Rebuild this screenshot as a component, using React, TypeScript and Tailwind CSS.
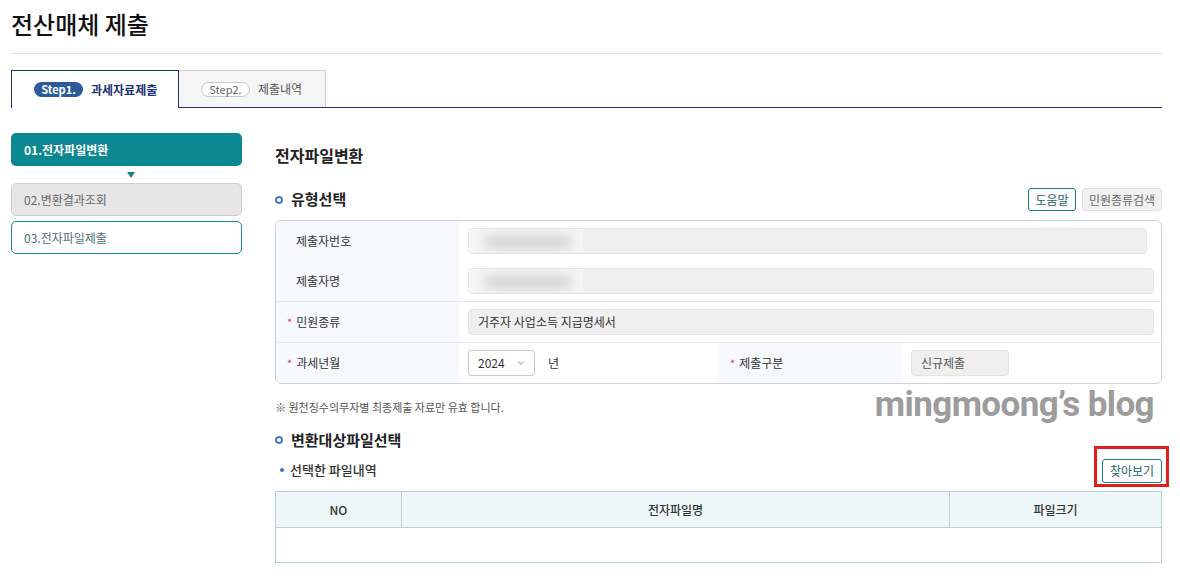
import { ChevronDown } from "lucide-react";

const font = { fontFamily: '"Noto Sans CJK KR", "Noto Sans", sans-serif' };

function Bullet() {
  return <span className="mr-[8px] inline-block h-[8px] w-[8px] rounded-full border-2 border-[#4a78d6]" />;
}

function Req() {
  return <span className="mr-[4px] text-[11px] text-[#d6336c]">*</span>;
}

function Blurred() {
  return (
    <div className="relative h-[26px] overflow-hidden rounded-[4px] border border-[#e6e6e6] bg-[#efefef]">
      <div className="absolute left-0 top-0 h-full w-[114px] bg-[#f6f6f6]" />
      <div className="absolute left-[14px] top-[6px] h-[14px] w-[90px] rounded-full bg-[#d4d4d4] blur-[6px]" />
    </div>
  );
}

export default function App() {
  return (
    <div className="min-h-[576px] bg-white text-[#222]" style={font}>
      <div className="ml-[11px] w-[1151px]">
        <div className="h-[54px] border-b border-[#e4e4e4] pt-[7px]">
          <h1 className="text-[24px] font-medium leading-[34px] text-[#111]">전산매체 제출</h1>
        </div>

        <div className="mt-[16px] flex h-[38px] border-b border-[#1e3276]">
          <div className="-mb-px flex w-[168px] items-center border border-b-0 border-[#1e3276] bg-white pl-[22px]">
            <span className="flex h-[15px] w-[49px] items-center justify-center rounded-full bg-[#2b5b99] text-[11px] font-bold text-white">
              Step1.
            </span>
            <span className="ml-[8px] text-[12px] font-bold text-[#1e3276]">과세자료제출</span>
          </div>
          <div className="flex w-[147px] items-center border-r border-t border-[#cfcfcf] bg-[#f6f6f6] pl-[22px]">
            <span className="flex h-[15px] w-[49px] items-center justify-center rounded-full border border-[#c8c8c8] bg-white text-[11px] text-[#666]">
              Step2.
            </span>
            <span className="ml-[8px] text-[12px] text-[#555]">제출내역</span>
          </div>
        </div>

        <div className="mt-[25px] flex">
          <nav className="w-[231px] shrink-0">
            <div className="flex h-[33px] items-center rounded-[5px] bg-[#0c8890] pl-[13px] text-[12px] font-bold text-white">
              01.전자파일변환
            </div>
            <div className="flex h-[17px] items-center justify-center pl-[9px]">
              <span className="h-0 w-0 border-l-[4px] border-r-[4px] border-t-[6px] border-l-transparent border-r-transparent border-t-[#1c7f86]" />
            </div>
            <div className="flex h-[33px] items-center rounded-[5px] border border-[#cfcfcf] bg-[#e6e6e6] pl-[12px] text-[12px] text-[#666]">
              02.변환결과조회
            </div>
            <div className="mt-[5px] flex h-[33px] items-center rounded-[5px] border border-[#1b8a8f] bg-white pl-[12px] text-[12px] text-[#4d6f77]">
              03.전자파일제출
            </div>
          </nav>

          <main className="relative ml-[33px] flex-1 pt-[10px]">
            <h2 className="text-[16px] font-bold leading-[24px] text-[#222]">전자파일변환</h2>

            <div className="mt-[21px] flex h-[23px] items-center justify-between">
              <div className="flex items-center text-[15px] font-bold">
                <Bullet />
                유형선택
              </div>
              <div className="flex gap-[6px]">
                <button className="h-[23px] w-[48px] rounded-[3px] border border-[#1b7f86] bg-white text-[12px] text-[#2a5f6a]">
                  도움말
                </button>
                <button className="h-[23px] w-[80px] rounded-[3px] border border-[#e2e2e2] bg-[#f1f1f1] text-[12px] text-[#666]">
                  민원종류검색
                </button>
              </div>
            </div>

            <div className="mt-[9px] overflow-hidden rounded-[6px] border border-[#c8d3e2] text-[12px] text-[#333]">
              <div className="flex h-[40px]">
                <div className="flex w-[183px] items-center bg-[#f8f9fc] pl-[20px]">제출자번호</div>
                <div className="flex-1 pl-[9px] pr-[14px] pt-[7px]">
                  <Blurred />
                </div>
              </div>
              <div className="flex h-[40px]">
                <div className="flex w-[183px] items-center bg-[#f8f9fc] pl-[20px]">제출자명</div>
                <div className="flex-1 pl-[9px] pr-[7px] pt-[7px]">
                  <Blurred />
                </div>
              </div>
              <div className="flex h-[41px] border-t border-[#e3e8ef]">
                <div className="flex w-[183px] items-center bg-[#f8f9fc] pl-[11px]">
                  <Req />
                  민원종류
                </div>
                <div className="flex flex-1 items-center pl-[9px] pr-[7px]">
                  <div className="flex h-[26px] w-full items-center rounded-[4px] border border-[#e3e3e3] bg-[#efefef] pl-[9px] text-[#333]">
                    거주자 사업소득 지급명세서
                  </div>
                </div>
              </div>
              <div className="flex h-[41px] border-t border-[#e3e8ef]">
                <div className="flex w-[183px] items-center bg-[#f8f9fc] pl-[11px]">
                  <Req />
                  과세년월
                </div>
                <div className="flex w-[260px] items-center pl-[9px]">
                  <div className="flex h-[26px] w-[67px] items-center justify-between rounded-[3px] border border-[#c9c9c9] bg-white pl-[9px] pr-[8px]">
                    <span>2024</span>
                    <ChevronDown size={10} strokeWidth={2} className="text-[#777]" />
                  </div>
                  <span className="ml-[13px]">년</span>
                </div>
                <div className="flex w-[183px] items-center bg-[#f8f9fc] pl-[11px]">
                  <Req />
                  제출구분
                </div>
                <div className="flex flex-1 items-center pl-[9px]">
                  <div className="flex h-[26px] w-[98px] items-center rounded-[4px] border border-[#e3e3e3] bg-[#efefef] pl-[9px] text-[#555]">
                    신규제출
                  </div>
                </div>
              </div>
            </div>

            <p className="mt-[14px] h-[18px] text-[11px] leading-[18px] text-[#555]">
              ※ 원천징수의무자별 최종제출 자료만 유효 합니다.
            </p>

            <div
              className="absolute right-[8px] top-[252px] text-[35px] font-bold leading-[40px] tracking-[-0.6px] text-[#9c9c9c]"
              style={{ fontFamily: "Roboto, Inter, sans-serif" }}
            >
              mingmoong’s blog
            </div>

            <div className="mt-[12px] flex h-[24px] items-center text-[15px] font-bold">
              <Bullet />
              변환대상파일선택
            </div>

            <div className="mt-[6px] flex h-[24px] items-center justify-between">
              <div className="flex items-center text-[13px] font-medium text-[#333]">
                <span className="ml-[5px] mr-[6px] inline-block h-[4px] w-[4px] rounded-full bg-[#3a6fd8]" />
                선택한 파일내역
              </div>
              <div className="relative">
                <button className="h-[24px] w-[60px] rounded-[3px] border border-[#1b7f86] bg-white text-[12px] text-[#2a5f6a]">
                  찾아보기
                </button>
                <div className="absolute -left-[8px] -top-[11px] h-[41px] w-[75px] border-[3px] border-[#e0201c]" />
              </div>
            </div>

            <table className="mt-[9px] w-full border-collapse text-[12px] text-[#333]">
              <thead>
                <tr className="h-[36px] bg-[#eef7f7]">
                  <th className="w-[126px] border border-[#b9d0d4] font-medium">NO</th>
                  <th className="border border-[#b9d0d4] font-medium">전자파일명</th>
                  <th className="w-[212px] border border-[#b9d0d4] font-medium">파일크기</th>
                </tr>
              </thead>
              <tbody>
                <tr className="h-[35px]">
                  <td colSpan={3} className="border border-[#b9d0d4]" />
                </tr>
              </tbody>
            </table>
          </main>
        </div>
      </div>
    </div>
  );
}
